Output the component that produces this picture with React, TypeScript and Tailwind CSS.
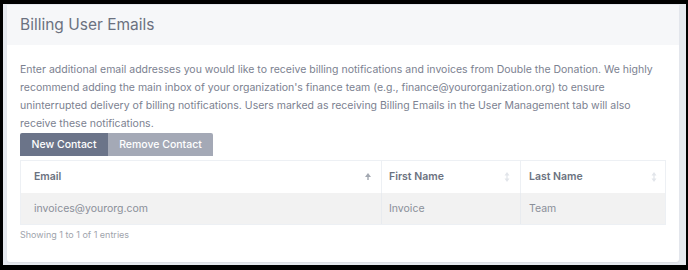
interface Contact {
  email: string
  firstName: string
  lastName: string
}

const CONTACTS: Contact[] = [
  { email: 'invoices@yourorg.com', firstName: 'Invoice', lastName: 'Team' },
]

function SortIcon({ active }: { active?: boolean }) {
  if (active) {
    return (
      <svg width="8" height="10" viewBox="0 0 8 10" className="shrink-0">
        <path d="M4 1 L7 5 L1 5 Z" fill="#a3a8b1" />
        <rect x="3.3" y="5" width="1.4" height="3" fill="#a3a8b1" />
      </svg>
    )
  }
  return (
    <svg width="8" height="12" viewBox="0 0 8 12" className="shrink-0">
      <path d="M4 1 L6.5 4.5 L1.5 4.5 Z" fill="#e2e5ea" />
      <path d="M4 11 L6.5 7.5 L1.5 7.5 Z" fill="#e2e5ea" />
      <rect x="3.4" y="4" width="1.2" height="4" fill="#e2e5ea" />
    </svg>
  )
}

export default function App() {
  return (
    <div
      className="h-[270px] w-[688px] bg-black pt-[4px] pl-[3px] pr-[2px] pb-[5px]"
      style={{ fontFamily: 'Inter, "Noto Sans", sans-serif' }}
    >
      <div className="h-full bg-[#e6e9ef] pl-[4px] pr-[7px] pt-[1px] pb-[3px]">
        <div className="h-full bg-white rounded-[3px] shadow-[0_1px_2px_rgba(0,0,0,0.06)] flex flex-col">
          {/* header */}
          <div className="h-[40px] bg-[#f6f7f9] flex items-center px-[13px]">
            <h2 className="text-[15.5px] text-[#6b7180] font-normal">Billing User Emails</h2>
          </div>

          <div className="px-[13px] pt-[16px]">
            <p className="text-[10.5px] leading-[18px] text-[#7b8190]">
              Enter additional email addresses you would like to receive billing notifications and invoices from Double the Donation. We highly
              recommend adding the main inbox of your organization's finance team (e.g., finance@yourorganization.org) to ensure
              uninterrupted delivery of billing notifications. Users marked as receiving Billing Emails in the User Management tab will also
              receive these notifications.
            </p>

            <div className="flex">
              <button className="h-[23px] w-[88px] bg-[#6b7489] text-white text-[10.5px] font-medium rounded-tl-[2px]">
                New Contact
              </button>
              <button className="h-[23px] w-[105px] bg-[#a4a9b6] text-white text-[10.5px] font-medium rounded-tr-[2px]">
                Remove Contact
              </button>
            </div>

            <div className="mt-[4px] w-[646px] border border-[#edf0f4]">
              <div className="grid grid-cols-[360px_139px_1fr] h-[32px] text-[10.5px] font-semibold text-[#6b7280]">
                <div className="flex items-center justify-between pl-[13px] pr-[9px]">
                  <span>Email</span>
                  <SortIcon active />
                </div>
                <div className="flex items-center justify-between pl-[7px] pr-[9px] border-l border-[#edf0f4]">
                  <span>First Name</span>
                  <SortIcon />
                </div>
                <div className="flex items-center justify-between pl-[8px] pr-[7px] border-l border-[#edf0f4]">
                  <span>Last Name</span>
                  <SortIcon />
                </div>
              </div>
              {CONTACTS.map((c) => (
                <div
                  key={c.email}
                  className="grid grid-cols-[360px_139px_1fr] h-[31px] bg-[#f2f2f2] text-[10.5px] text-[#8a8f99]"
                >
                  <div className="flex items-center pl-[13px]">{c.email}</div>
                  <div className="flex items-center pl-[7px] border-l border-[#e8ebef]">{c.firstName}</div>
                  <div className="flex items-center pl-[8px] border-l border-[#e8ebef]">{c.lastName}</div>
                </div>
              ))}
            </div>

            <div className="mt-[3px] text-[9px] text-[#a0a4ac]">Showing 1 to 1 of 1 entries</div>
          </div>
        </div>
      </div>
    </div>
  )
}
